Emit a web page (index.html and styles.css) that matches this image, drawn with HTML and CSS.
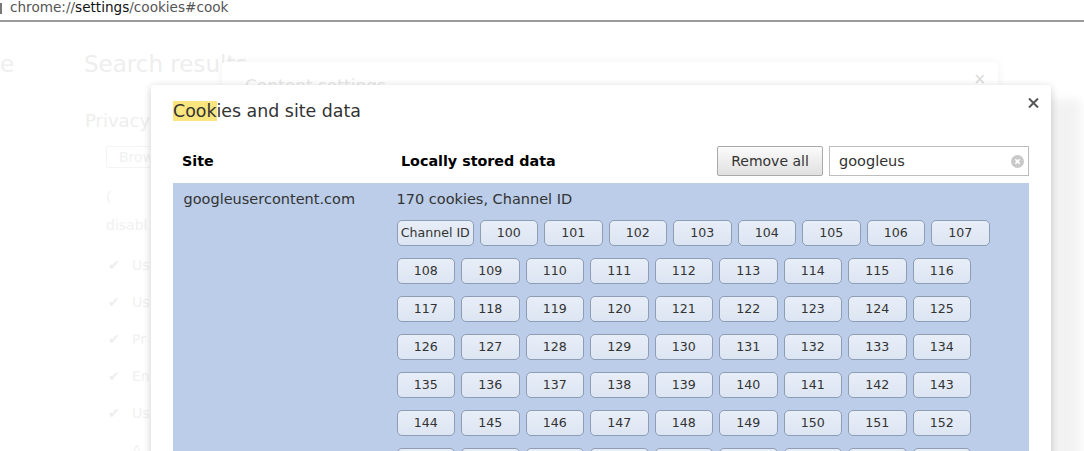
FILE: index.html
```html
<!DOCTYPE html>
<html>
<head>
<meta charset="utf-8">
<title>Cookies and site data</title>
<link rel="stylesheet" href="styles.css">
</head>
<body>
<div class="urlbar"><span class="url-icon"></span><span class="url">chrome://<span class="host">settings</span>/cookies#cook</span></div>

<div class="page">
  <div class="bg-nav"><span class="bg-nav-text">e</span></div>
  <div class="bg-main">
    <div class="bg-title">Search results</div>
    <div class="bg-section">Privacy</div>
    <div class="bg-items">
      <div class="bg-button">Brow</div>
      <div class="bg-line">(</div>
      <div class="bg-line bg-tight">disabl</div>
      <div class="bg-check first"><span class="tick">✔</span>Us</div>
      <div class="bg-check"><span class="tick">✔</span>Us</div>
      <div class="bg-check"><span class="tick">✔</span>Pr</div>
      <div class="bg-check"><span class="tick">✔</span>En</div>
      <div class="bg-check"><span class="tick">✔</span>Us</div>
      <div class="bg-check"><span class="tick"></span>A</div>
    </div>
  </div>

  <div class="bg-dialog">
    <div class="bg-dialog-title">Content settings</div>
    <span class="bg-dialog-close">×</span>
  </div>
</div>

<div class="dialog">
  <svg class="close" width="11" height="10" viewBox="0 0 11 10" aria-label="Close">
    <path d="M1 0.5 L10 9.5 M10 0.5 L1 9.5" stroke="#555" stroke-width="2" fill="none"/>
  </svg>
  <h1 class="title"><span class="hl">Cook</span>ies and site data</h1>

  <div class="header">
    <div class="col-site">Site</div>
    <div class="col-data">Locally stored data</div>
    <button class="btn">Remove all</button>
    <div class="search">
      <span class="search-text">googleus</span>
      <span class="clear"><svg width="13" height="13" viewBox="0 0 13 13"><circle cx="6.5" cy="6.5" r="6.5" fill="#c9c9c9"/><path d="M4.3 4.3 L8.7 8.7 M8.7 4.3 L4.3 8.7" stroke="#fff" stroke-width="1.6"/></svg></span>
    </div>
  </div>

  <div class="list">
    <div class="row">
      <div class="site">googleusercontent.com</div>
      <div class="data">
        <div class="summary">170 cookies, Channel ID</div>
        <div class="chips">
          <span class="chip wide">Channel ID</span>
          <span class="chip">100</span><span class="chip">101</span><span class="chip">102</span><span class="chip">103</span><span class="chip">104</span><span class="chip">105</span><span class="chip">106</span><span class="chip">107</span>
          <span class="chip">108</span><span class="chip">109</span><span class="chip">110</span><span class="chip">111</span><span class="chip">112</span><span class="chip">113</span><span class="chip">114</span><span class="chip">115</span><span class="chip">116</span>
          <span class="chip">117</span><span class="chip">118</span><span class="chip">119</span><span class="chip">120</span><span class="chip">121</span><span class="chip">122</span><span class="chip">123</span><span class="chip">124</span><span class="chip">125</span>
          <span class="chip">126</span><span class="chip">127</span><span class="chip">128</span><span class="chip">129</span><span class="chip">130</span><span class="chip">131</span><span class="chip">132</span><span class="chip">133</span><span class="chip">134</span>
          <span class="chip">135</span><span class="chip">136</span><span class="chip">137</span><span class="chip">138</span><span class="chip">139</span><span class="chip">140</span><span class="chip">141</span><span class="chip">142</span><span class="chip">143</span>
          <span class="chip">144</span><span class="chip">145</span><span class="chip">146</span><span class="chip">147</span><span class="chip">148</span><span class="chip">149</span><span class="chip">150</span><span class="chip">151</span><span class="chip">152</span>
          <span class="chip">153</span><span class="chip">154</span><span class="chip">155</span><span class="chip">156</span><span class="chip">157</span><span class="chip">158</span><span class="chip">159</span><span class="chip">160</span><span class="chip">161</span>
        </div>
      </div>
    </div>
  </div>
</div>
</body>
</html>
```

FILE: styles.css
```css
* { box-sizing: border-box; }

html, body {
  margin: 0;
  padding: 0;
}

body {
  position: relative;
  width: 1084px;
  height: 451px;
  overflow: hidden;
  background: #fff;
  font-family: "DejaVu Sans", "Liberation Sans", sans-serif;
  color: #333;
}

/* ---------- address bar ---------- */
.urlbar {
  height: 22px;
  border-bottom: 2px solid #9b9b9b;
  display: flex;
  align-items: flex-start;
  background: #fff;
}

.url-icon {
  width: 2px;
  height: 11px;
  margin-top: 3px;
  background: #777;
}

.url {
  margin-left: 8px;
  font-size: 13.6px;
  line-height: 14px;
  color: #555;
  white-space: nowrap;
}

.url .host { color: #111; }

/* ---------- faded background page ---------- */
.page {
  display: flex;
  height: 429px;
  overflow: hidden;
  color: #efefef;
}

.bg-nav {
  width: 84px;
  flex: none;
  overflow: hidden;
}

.bg-nav-text {
  display: block;
  margin-top: 28px;
  font-size: 23px;
  line-height: 28px;
  color: #efefef;
}

.bg-main { flex: 1; }

.bg-title {
  margin-top: 28px;
  font-size: 23px;
  line-height: 28px;
  color: #eeeeee;
  white-space: nowrap;
}

.bg-section {
  margin-top: 32px;
  margin-left: 1px;
  font-size: 18px;
  line-height: 22px;
  color: #eeeeee;
}

.bg-items {
  width: 66px;
  padding-left: 22px;
  font-size: 14px;
  color: #f1f1f1;
  overflow: hidden;
}

.bg-button {
  margin-top: 14px;
  width: 60px;
  height: 22px;
  line-height: 20px;
  padding-left: 12px;
  border: 1px solid #f4f4f4;
  border-radius: 2px;
  white-space: nowrap;
}

.bg-line {
  margin-top: 18px;
  line-height: 22px;
}

.bg-line.bg-tight { margin-top: 6px; }

.bg-check {
  display: flex;
  margin-top: 15px;
  line-height: 22px;
  white-space: nowrap;
}

.bg-check.first { margin-top: 18px; }

.tick {
  width: 26px;
  flex: none;
  padding-left: 2px;
  color: #eeeeee;
}

/* ---------- background dialog (Content settings) ---------- */
.bg-dialog {
  position: absolute;
  left: 222px;
  top: 62px;
  width: 776px;
  height: 420px;
  background: #fff;
  border-radius: 3px;
  box-shadow: 0 0 10px rgba(0, 0, 0, 0.06);
}

.bg-dialog-title {
  padding: 14px 0 0 23px;
  font-size: 17px;
  line-height: 21px;
  color: #e8e8e8;
}

.bg-dialog-close {
  position: absolute;
  right: 12px;
  top: 8px;
  font-size: 15px;
  color: #d8d8d8;
}

/* ---------- main dialog ---------- */
.dialog {
  position: absolute;
  left: 151px;
  top: 85px;
  width: 900px;
  height: 400px;
  padding: 16px 22px 0 22px;
  background: #fff;
  border-radius: 3px;
  box-shadow:
    0 2px 9px rgba(0, 0, 0, 0.2),
    30px 14px 10px rgba(0, 0, 0, 0.05);
}

.close {
  position: absolute;
  right: 12px;
  top: 13px;
  display: block;
}

.title {
  margin: 0;
  font-size: 17.4px;
  font-weight: normal;
  line-height: 21px;
  color: #333;
  white-space: nowrap;
}

.hl { background: #fae57f; }

.header {
  display: flex;
  align-items: center;
  height: 30px;
  margin-top: 24px;
}

.col-site {
  width: 228px;
  flex: none;
  padding-left: 9px;
  font-size: 14.3px;
  font-weight: bold;
  color: #000;
}

.col-data {
  flex: 1;
  font-size: 14.3px;
  font-weight: bold;
  color: #000;
}

.btn {
  width: 106px;
  height: 30px;
  margin-top: -1px;
  margin-right: 6px;
  padding: 0;
  border: 1px solid #a9a9a9;
  border-radius: 2px;
  background: linear-gradient(#fbfbfb, #e0e0e0);
  font-family: inherit;
  font-size: 14px;
  color: #333;
}

.search {
  display: flex;
  align-items: center;
  width: 200px;
  height: 30px;
  padding: 0 4px 0 9px;
  border: 1px solid #bdbdbd;
  background: #fff;
}

.search-text {
  flex: 1;
  font-size: 14.5px;
  color: #333;
}

.clear {
  display: flex;
  width: 13px;
  height: 13px;
  margin-top: 1px;
}

.list {
  margin-top: 7px;
  height: 300px;
  padding: 7px 0 0 10.5px;
  background: #bbcde9;
}

.row { display: flex; }

.site {
  width: 213px;
  flex: none;
  font-size: 14.5px;
  line-height: 18px;
  color: #333;
}

.data { flex: 1; }

.summary {
  font-size: 14.5px;
  line-height: 18px;
  color: #333;
}

.chips {
  display: flex;
  flex-wrap: wrap;
  gap: 12px 6px;
  width: 612px;
  margin-top: 12px;
}

.chip {
  width: 58.5px;
  height: 26px;
  border: 1px solid #8f9db4;
  border-radius: 5px;
  background: linear-gradient(#e8eef8, #dce5f2);
  font-size: 12.6px;
  line-height: 24px;
  text-align: center;
  color: #333;
}

.chip.wide {
  width: 77.5px;
  margin-right: -0.5px;
}
```
